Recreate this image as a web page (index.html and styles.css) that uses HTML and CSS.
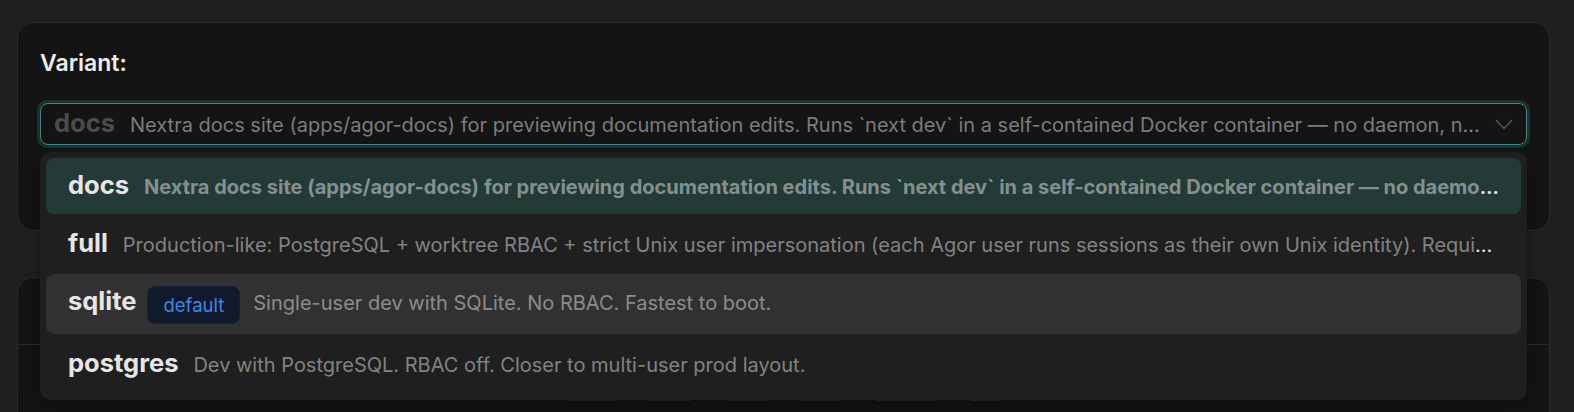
FILE: index.html
```html
<!DOCTYPE html>
<html lang="en">
<head>
    <meta charset="UTF-8">
    <meta name="viewport" content="width=device-width, initial-scale=1.0">
    <title>Variant</title>
    <link rel="stylesheet" href="styles.css">
</head>
<body>

<!-- variant picker -->
<div class="card card-variant">
    <div class="field-label">Variant:</div>
    <div class="select-wrap">
        <div class="select">
            <div class="select-value">
                <span class="opt-name">docs</span><span class="opt-desc">Nextra docs site (apps/agor-docs) for previewing documentation edits. Runs `next dev` in a self-contained Docker container — no daemon, no database, hot reload on save.</span>
            </div>
            <svg class="chevron" width="18" height="11" viewBox="0 0 18 11">
                <polyline points="1,1 9,9.5 17,1" fill="none" stroke="#5c5c5c" stroke-width="1.4"/>
            </svg>
        </div>

        <div class="dropdown">
            <div class="option selected">
                <span class="opt-name">docs</span><span class="opt-desc">Nextra docs site (apps/agor-docs) for previewing documentation edits. Runs `next dev` in a self-contained Docker container — no daemon, no database, hot reload on save.</span>
            </div>
            <div class="option">
                <span class="opt-name">full</span><span class="opt-desc">Production-like: PostgreSQL + worktree RBAC + strict Unix user impersonation (each Agor user runs sessions as their own Unix identity). Requires sudo setup inside the container.</span>
            </div>
            <div class="option hovered">
                <span class="opt-name">sqlite</span><span class="badge">default</span><span class="opt-desc">Single-user dev with SQLite. No RBAC. Fastest to boot.</span>
            </div>
            <div class="option">
                <span class="opt-name">postgres</span><span class="opt-desc">Dev with PostgreSQL. RBAC off. Closer to multi-user prod layout.</span>
            </div>
        </div>
    </div>
</div>

<!-- next section, mostly under the open menu -->
<div class="card card-next">
    <div class="card-head"></div>
    <div class="card-body">
        <div class="btn-row">
            <span class="ghost-btn" style="width: 61px;"></span>
            <span class="ghost-btn" style="width: 53px;"></span>
            <span class="ghost-btn" style="width: 52px;"></span>
            <span class="ghost-btn" style="width: 52px;"></span>
            <span class="ghost-btn" style="width: 72px;"></span>
            <span class="ghost-btn" style="width: 42px;"></span>
        </div>
    </div>
</div>

</body>
</html>
```

FILE: styles.css
```css
body {
    margin: 0;
    padding: 22px 24px 0 17px;
    background: #1f1f1f;
    font-family: Inter, 'Noto Sans', sans-serif;
    color: #e8e8e8;
    overflow: hidden;
}

.card {
    background-color: #141414;
    border: 1px solid #2b2b2b;
    border-radius: 16px;
    box-sizing: border-box;
}

.card-variant {
    padding: 22px;
    min-height: 209px;
}

.field-label {
    font-size: 23px;
    font-weight: 600;
    line-height: 33px;
    padding-top: 2px;
    margin-bottom: 23px;
    color: #ececec;
}

.select-wrap {
    position: relative;
}

.select {
    height: 42px;
    box-sizing: border-box;
    border: 1px solid #3f8b83;
    border-radius: 8px;
    box-shadow: 0 0 0 3px #1c3330;
    display: flex;
    align-items: center;
    gap: 12px;
    padding: 0 13px 0 13px;
}

.select-value {
    flex: 1;
    min-width: 0;
    white-space: nowrap;
    overflow: hidden;
    text-overflow: ellipsis;
    font-size: 20px;
    line-height: 37px;
    padding-top: 3px;
    color: #8c8c8c;
}

.select-value .opt-name {
    color: #4c4c4c;
}

.select-value .opt-desc {
    color: #7c7c7c;
}

.chevron {
    flex-shrink: 0;
}

.opt-name {
    font-size: 25.5px;
    font-weight: 700;
    line-height: 1;
    margin-right: 15px;
}

.opt-desc {
    font-size: 20px;
    line-height: 1;
    color: rgba(255, 255, 255, 0.45);
}

.dropdown {
    position: absolute;
    top: calc(100% + 7px);
    left: 0;
    right: 0;
    z-index: 10;
    background-color: #1f1f1f;
    border-radius: 10px;
    padding: 6px 6px 8px;
    display: flex;
    flex-direction: column;
    gap: 2px;
    box-shadow: 0 6px 16px rgba(0, 0, 0, 0.32);
}

.option {
    padding: 12px 22px 10px;
    font-size: 20px;
    line-height: 34px;
    border-radius: 8px;
    white-space: nowrap;
    overflow: hidden;
    text-overflow: ellipsis;
    color: #e6e6e6;
}

.option.selected {
    background-color: #243a37;
    font-weight: 600;
}

.option.selected .opt-desc {
    font-weight: 650;
}

.option.hovered {
    background-color: #313131;
}

.badge {
    display: inline-block;
    vertical-align: middle;
    height: 38px;
    line-height: 36px;
    box-sizing: border-box;
    padding: 0 15px;
    margin: 0 13px 0 -4px;
    font-size: 18.5px;
    color: #3f88e6;
    background-color: #111a2c;
    border: 1px solid #14213a;
    border-radius: 8px;
}

.card-next {
    margin-top: 46px;
    height: 200px;
}

.card-head {
    height: 66px;
    border-bottom: 1px solid #2b2b2b;
}

.card-body {
    padding-top: 23px;
}

.btn-row {
    display: flex;
    justify-content: center;
    gap: 23px;
}

.ghost-btn {
    display: block;
    height: 33px;
    border: 1px solid #2a2a2a;
    border-radius: 8px;
    box-sizing: border-box;
}
```
